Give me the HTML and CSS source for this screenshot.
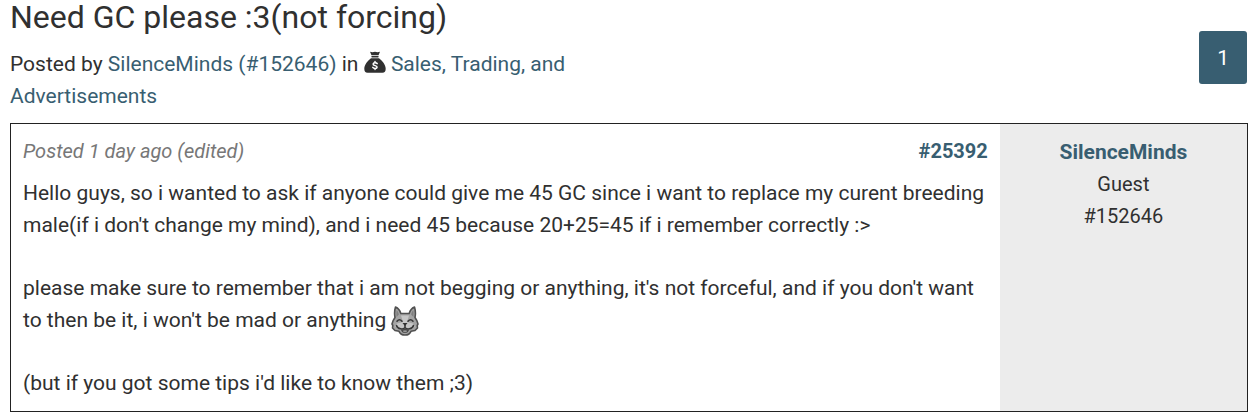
FILE: index.html
```
<!DOCTYPE html>
<html lang="en">
<head>
  <meta charset="UTF-8" />
  <meta name="viewport" content="width=device-width, initial-scale=1.0" />
  <title>Need GC please :3(not forcing)</title>
  <link rel="stylesheet" href="styles.css">
</head>
<body>
  <header class="thread-header">
    <div class="thread-heading">
      <h1 class="thread-title">Need GC please :3(not forcing)</h1>
      <p class="thread-info">
        Posted by <a href="#user">SilenceMinds (#152646)</a> in
        <svg class="icon-bag" viewBox="0 0 22 22" aria-hidden="true">
          <path fill="#303030" d="M6 .8Q8.500 1.500 11 .8q2.500.7 5 0L14.500 4.200h-7zM8 5h6q.7 0 .7.700t-.7.700H8q-.7 0-.7-.7T8 5zM7 7.200h8c3 2.100 6.700 6.300 6.700 10.600 0 2.700-1 3.900-3.300 3.900H3.600C1.300 21.700.3 20.500.3 17.800.3 13.500 4 9.300 7 7.200z"/>
          <path fill="none" stroke="#fff" stroke-width="1.500" stroke-linecap="round" d="M13.200 12.600c-.5-1-3.900-1.300-4.100.4-.2 2 4.200 1.300 4 3.200-.2 1.700-3.500 1.500-4.300.2M11 10.500v1M11 17.400v1"/>
        </svg>
        <a href="#board">Sales, Trading, and Advertisements</a>
      </p>
    </div>
    <nav class="pagination" aria-label="Pages">
      <a class="page-link" href="#page-1">1</a>
    </nav>
  </header>

  <article class="post">
    <div class="post-main">
      <div class="post-meta">
        <em class="post-date">Posted 1 day ago (edited)</em>
        <a class="post-id" href="#25392">#25392</a>
      </div>
      <div class="post-body">
        <p>Hello guys, so i wanted to ask if anyone could give me 45 GC since i want to replace my curent breeding male(if i don't change my mind), and i need 45 because 20+25=45 if i remember correctly :&gt;</p>
        <p>please make sure to remember that i am not begging or anything, it's not forceful, and if you don't want to then be it, i won't be mad or anything
          <svg class="icon-wolf" viewBox="0 0 28 30" role="img" aria-label="Smiling wolf">
            <path fill="#a4a4a4" stroke="#505050" stroke-width="1.600" stroke-linejoin="round" d="M4.500 1C7 2 9 4.500 9.800 7.500h8.400C19 4.500 21 2 23.500 1c.9 3 1.200 7 .5 10.500 1.500 2 2.500 4 3 6.500l-.8 1.500.3 2.500-2.500 2.500-4 .8c-1 2.200-3 3.700-6 3.700s-5-1.500-6-3.700L4 24.500 1.500 22l.3-2.500L1 18c.5-2.500 1.500-4.500 3-6.500C3.300 8 3.600 4 4.500 1z"/>
            <path fill="#808080" d="M5.700 4c1.200 1.300 1.800 2.600 2.200 4.500L5.600 11c-.4-2.300-.4-4.500.1-7zM22.300 4c-1.200 1.300-1.800 2.600-2.200 4.500l2.300 2.500c.4-2.300.4-4.500-.1-7z"/>
            <path fill="#c6c6c6" d="M10 9.500h8L16 16l6 1.500 2 2.500-3 3H7l-3-3 2-2.500 6-1.500z"/>
            <path fill="none" stroke="#383838" stroke-width="1.600" stroke-linecap="round" stroke-linejoin="round" d="M6 15.200q2.500-3 5 0M17 15.200q2.500-3 5 0M5.500 19.500c1 3.700 7 4.500 8.500 1.800 1.500 2.700 7.500 1.900 8.500-1.800M14 19v2"/>
            <path fill="#303030" d="M11.500 17h5L14 20z"/>
            <path fill="#484848" d="M9.800 23.500q2.200.2 4.200-1 2 1.200 4.200 1-1 3.500-4.200 3.500t-4.200-3.500z"/>
            <path fill="#999" d="M11.800 24.800q2.200-1 4.400 0-.5 1.500-2.200 1.500t-2.200-1.500z"/>
          </svg>
        </p>
        <p>(but if you got some tips i'd like to know them ;3)</p>
      </div>
    </div>
    <aside class="post-author">
      <a class="author-name" href="#user">SilenceMinds</a>
      <span>Guest</span>
      <span>#152646</span>
    </aside>
  </article>
</body>
</html>
```
FILE: styles.css
```
:root {
  --text: #303030;
  --link: #385e71;
  --muted: #777;
  --border: #222;
  --panel: #ececec;
}
* { margin: 0; padding: 0; box-sizing: border-box; }
body {
  background: #fff;
  color: var(--text);
  font-family: Roboto, sans-serif;
  font-size: 21px;
  line-height: 32px;
  padding: 0 3px 4px 10px;
}
a { color: var(--link); text-decoration: none; }
.thread-header {
  display: flex;
  align-items: center;
  justify-content: space-between;
  padding-bottom: 11px;
}
.thread-heading { width: 50%; }
.thread-title {
  font-size: 32px;
  font-weight: 400;
  line-height: 34px;
  margin-bottom: 14px;
  white-space: nowrap;
}
.pagination { padding-top: 3px; }
.page-link {
  display: block;
  background: var(--link);
  color: #fff;
  border-radius: 3px;
  padding: 11px 18px 10px;
  margin-right: 1px;
}
.icon-bag {
  width: 22px;
  height: 22px;
  vertical-align: -2px;
}
.post {
  display: grid;
  grid-template-columns: 4fr 1fr;
  border: 1px solid var(--border);
}
.post-main { padding: 11px 12px 12px; }
.post-meta {
  display: flex;
  justify-content: space-between;
  font-size: 20px;
  margin-bottom: 10px;
}
.post-date { color: var(--muted); }
.post-id, .author-name { font-weight: 700; }
.post-body p + p { margin-top: 31px; }
.icon-wolf {
  width: 28px;
  height: 30px;
  vertical-align: middle;
}
.post-author {
  display: flex;
  flex-direction: column;
  align-items: center;
  background: var(--panel);
  font-size: 20px;
  padding: 12px;
}
.author-name { font-size: 21px; }
```
